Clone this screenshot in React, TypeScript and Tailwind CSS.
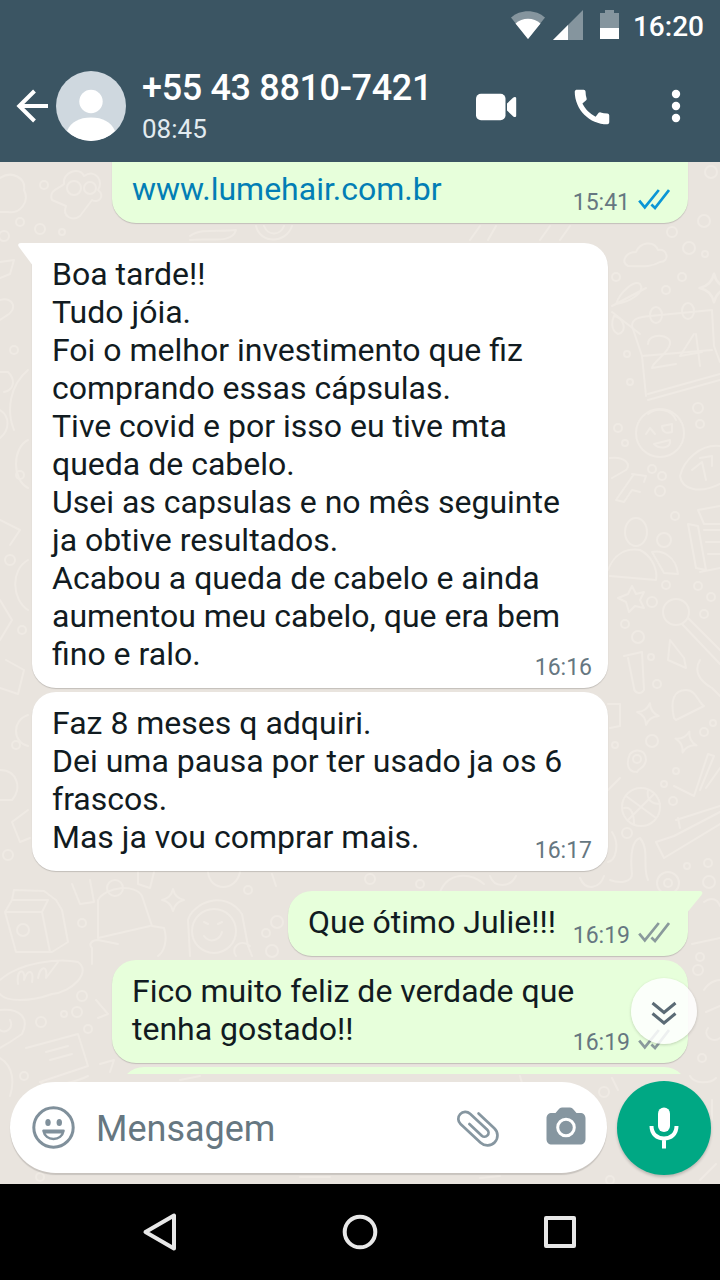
import type { ReactNode } from "react";
import { clsx } from "clsx";

interface BubbleProps {
  lines: string[];
  time: string;
  sent?: boolean;
  read?: boolean;
  link?: boolean;
  tail?: boolean;
  className?: string;
}

const Checks = ({ read }: { read?: boolean }) => (
  <svg
    width="32"
    height="22"
    viewBox="0 0 32 22"
    fill="none"
    strokeWidth="2.7"
    className={clsx("mb-[7px] ml-2", read ? "stroke-[#0a96d6]" : "stroke-[#8a9a9c]")}
  >
    <path d="M1.2 12.6L6.8 19.4L20.8 2" />
    <path d="M13.4 16.6L17 20L31 2" />
  </svg>
);

const Bubble = ({ lines, time, sent, read, link, tail, className }: BubbleProps) => (
  <div
    className={clsx(
      "relative flex shrink-0 items-end pt-3 pb-[15px] pl-5 shadow-[0_1px_1px_rgba(0,0,0,0.17)]",
      sent ? "self-end bg-[#e7ffdb] pr-[18px]" : "self-start bg-white pr-4",
      className
    )}
  >
    {tail && !sent && (
      <svg width="16" height="24" viewBox="0 0 16 24" className="absolute top-0 -left-[14px]">
        <path d="M16 0H3C.2 0-.6 2 1 4L14 21.500H16Z" fill="#fff" />
      </svg>
    )}
    {tail && sent && (
      <svg width="17" height="24" viewBox="0 0 17 24" className="absolute top-0 -right-[15px]">
        <path d="M0 0H13.500C16.500 0 17 2 15.500 4L2 20.500H0Z" fill="#e7ffdb" />
      </svg>
    )}
    <p
      className={clsx(
        "w-0 flex-1 text-[32px] leading-[38px] whitespace-nowrap",
        link ? "text-[#027eb5]" : "text-[#111b21]"
      )}
    >
      {lines.map((line) => (
        <span key={line} className="block">
          {line}
        </span>
      ))}
    </p>
    <div className="-mb-[9px] flex shrink-0 items-end text-[23px] leading-7 text-[#667781]">
      <span>{time}</span>
      {sent && <Checks read={read} />}
    </div>
  </div>
);

const star = "M0-11Q2-2 11 0Q2 2 0 11Q-2 2-11 0Q-2-2 0-11Z";

const dots: [number, number, number][] = [
  [711, 172, 6], [704, 221, 6], [672, 232, 5], [689, 248, 6], [705, 254, 3], [616, 277, 4], [682, 277, 4],
  [666, 290, 4], [627, 354, 3], [630, 382, 3], [698, 408, 5], [618, 428, 4], [700, 424, 4], [625, 443, 3],
  [652, 469, 4], [662, 476, 4], [660, 491, 5], [675, 516, 4], [664, 540, 7], [666, 585, 4], [698, 586, 4],
  [652, 602, 5], [711, 597, 4], [704, 614, 4], [625, 624, 4], [638, 637, 6], [651, 657, 3], [657, 684, 4],
  [713, 723, 3], [704, 732, 4], [652, 741, 6], [615, 745, 3], [676, 771, 3], [664, 784, 3], [673, 801, 4],
  [627, 833, 5], [687, 866, 3], [708, 863, 4], [709, 882, 6], [248, 890, 4], [277, 922, 6], [266, 933, 4],
  [272, 951, 6], [82, 923, 4], [82, 996, 5], [64, 1014, 3], [77, 1012, 5], [41, 1022, 5], [88, 1029, 4],
  [24, 1076, 4], [700, 957, 4], [698, 970, 5], [702, 1058, 4], [44, 185, 4], [20, 222, 4], [40, 229, 5],
  [4, 236, 5], [62, 232, 3], [14, 350, 4], [20, 475, 4], [10, 560, 5], [22, 630, 4], [16, 745, 4],
  [8, 855, 5], [420, 884, 4], [370, 879, 5], [604, 1092, 5], [610, 1180, 4], [40, 1177, 4],
];

const Wallpaper = () => (
  <svg
    width="720"
    height="1022"
    viewBox="0 162 720 1022"
    fill="none"
    stroke="#efeae4"
    strokeWidth="2"
    strokeLinejoin="round"
    strokeLinecap="round"
    className="absolute inset-0"
  >
    {dots.map(([x, y, r]) => (
      <circle key={`${x}-${y}`} cx={x} cy={y} r={r} />
    ))}

    {/* top left: cloud, hat, rings */}
    <path d="M0 178C12 170 26 178 24 190C30 202 20 214 8 212H0" />
    <path d="M52 200C48 190 60 188 64 184C62 172 80 166 84 176C96 168 104 182 98 190C106 196 98 204 92 200L80 216C72 222 62 216 66 206Z" />
    <circle cx="74" cy="188" r="7" />
    <circle cx="90" cy="188" r="6" />
    <path d="M190 236C200 228 220 232 236 230C232 244 210 238 190 240M256 226C260 244 286 244 292 226M264 226C268 236 280 236 284 226" />
    <path d="M470 240L480 226M488 240L496 226M540 240L550 226M560 240L570 226" />

    {/* left edge */}
    <path d="M0 262L14 260L10 274L0 278M0 300C14 296 18 310 6 316L0 320M0 372H8C16 380 14 390 4 392" />
    <path d="M28 370C10 385 6 410 14 430M0 410C10 416 10 430 0 438M28 440C12 448 12 480 28 488" />
    <path d="M0 520L20 530L10 545M28 560C10 570 12 600 28 610M0 600L12 620L0 640M6 660L24 670L18 694L0 688" />
    <path d="M28 715C12 720 12 742 28 746M0 770C18 770 22 790 12 800H0M28 810L12 822L20 842L30 838" />

    {/* right: cloud, scissors, calendar */}
    <path d="M628 266C620 262 626 252 636 252C640 242 654 240 658 250C668 248 670 262 660 262C650 268 640 266 628 266Z" />
    <path d="M612 306L646 288M612 312L640 334M616 304C620 292 634 280 640 284C646 292 630 302 616 304ZM614 316C624 318 628 332 618 334C610 330 612 320 614 316Z" />
    <path transform="translate(714 288) scale(1.3)" d={star} />
    <path d="M642 356L632 326C632 318 640 317 650 316L712 310L714 346L720 362M642 356L712 350M642 356L646 396M648 400L720 380M648 394L720 374" />
    <ellipse cx="656" cy="315" rx="6" ry="8" />
    <ellipse cx="688" cy="311" rx="6" ry="8" />
    <path d="M648 344C648 332 672 334 670 344C668 354 652 362 652 368L676 364M694 334L680 356L702 352M696 334L700 366" />
    <path d="M648 414C658 406 672 410 676 420" />

    {/* smiley, letters, bread */}
    <circle cx="660" cy="433" r="24" />
    <path d="M646 434L650 428L655 434M662 426L672 424L672 432C666 434 662 432 662 426ZM654 444L670 440C672 448 660 450 654 444Z" />
    <path d="M610 458C624 456 632 464 626 470L612 478M634 474L616 500L624 502L632 490L640 492M632 474L646 476L644 482" />
    <path d="M720 446C700 444 684 460 680 476C682 490 700 494 720 484M692 470L702 462L706 480M700 458L712 456V466" />
    <ellipse cx="636" cy="532" rx="11" ry="14" />
    <path d="M608 570C614 554 626 548 640 550C652 556 658 570 656 580L610 576M652 552C662 550 676 556 678 574L664 573Z" />
    <path d="M720 506L698 510L704 524H720M720 530H704M720 542H706M688 524L696 568L706 570L698 526ZM700 572L720 568M720 554H708" />

    {/* star, wand, bell */}
    <path d="M632 586L636 594L644 592L640 600L644 608L635 606L629 612L626 602L618 598L628 594Z" />
    <circle cx="676" cy="612" r="13" />
    <path d="M682 624L720 664M688 618L720 650M670 640L684 658L686 668L668 660Z" />
    <path d="M624 656L642 652L644 690C640 696 634 692 634 688L628 658M608 704H620V726L610 728M700 660C694 670 698 680 712 688L720 696" />
    <path d="M674 718C670 700 674 690 686 690C696 690 698 702 704 706L676 720Z" />
    <path transform="translate(648 714) rotate(10)" d={star} />
    <path transform="translate(686 742) rotate(18)" d={star} />
    <path d="M637 772C624 772 628 758 630 754C636 748 646 750 646 760C644 770 640 766 637 772Z" />
    <circle cx="637" cy="759" r="4" />
    <circle cx="641" cy="807" r="19" />
    <path d="M626 796L656 818M628 820L654 794M624 808C632 806 634 816 634 824M648 790C646 800 652 804 660 804" />
    <path d="M674 786L694 796L708 754L714 756L700 790M706 788L720 768M608 790L620 778" />
    <path d="M676 820L720 806M656 842L664 858L720 824M656 842L674 836L720 812M678 818L680 828" />
    <path d="M610 880C620 884 632 882 632 874C630 856 632 840 640 838C650 850 642 868 648 880M612 832C620 844 616 860 608 862" />
    <circle cx="668" cy="883" r="11" />
    <circle cx="668" cy="883" r="4" />

    {/* lower left: carton, bag, avatar, roll */}
    <path d="M12 900L14 890L44 891L56 900L62 910L68 942L52 952L16 952L5 912L12 900ZM5 912H42L50 952M42 912L48 900H12" />
    <circle cx="23" cy="930" r="6" />
    <path d="M72 884L80 904L94 902L90 880M138 872V884L150 888L154 872" />
    <path d="M98 938L98 900C106 886 136 884 142 896L152 926L164 928C168 940 164 952 158 956M98 938L150 926M92 964V948C88 944 92 940 98 940L118 944" />
    <circle cx="115" cy="888" r="8" />
    <path transform="translate(173 900)" d={star} />
    <path d="M190 956L188 920C192 904 224 888 242 914L248 946L252 956M236 956C230 948 240 938 250 946" />
    <circle cx="214" cy="931" r="22" />
    <path d="M204 922L208 924M218 924L222 922M204 936C210 944 220 940 222 932M208 872C210 892 236 892 240 872M272 874L276 886" />
    <path d="M0 980C20 962 60 958 78 962C92 972 72 992 52 994C30 1002 6 1002 0 994M18 984C16 968 26 968 24 980C28 968 34 970 32 982M38 978C40 966 48 964 46 978L58 962" />
    <path d="M0 1010C20 1008 30 1018 22 1034L10 1042L0 1048M0 1030C6 1034 14 1028 10 1020" />
    <path d="M26 1048L78 1034L88 1066L40 1082M46 1052L68 1046M50 1060L72 1054M96 1000L108 1014L98 1018M100 1064L114 1060L110 1072" />
    <path d="M0 1058C14 1066 14 1084 10 1096M40 1082C50 1090 80 1080 88 1076" />

    {/* lower right */}
    <path d="M440 892C448 872 470 872 484 884M490 876C494 888 510 888 516 876M580 878C586 892 600 888 604 876" />
    <path d="M704 902C712 896 718 900 720 906M692 944L720 938M704 990C710 980 720 980 720 980M706 1012L720 1006M708 1028C702 1036 714 1044 720 1038" />
    <path d="M520 1076L524 1090M612 1078L618 1090M690 1076C694 1084 710 1084 716 1078M712 1100V1120M300 1177H330M180 1080L200 1076M480 1178L500 1176M700 1180L716 1164" />
  </svg>
);

const StatusBar = () => (
  <div className="flex h-[50px] items-center justify-end pr-4 text-white">
    <svg width="110" height="32" viewBox="510 9 110 32" fill="#fff" className="mr-[13px]">
      <path d="M528 39L511 17.500C520 9 536 9 545 17.500Z" opacity=".38" />
      <path d="M528 39L515.500 23.500C522 17 534 17 540.500 23.500Z" />
      <path d="M553 40L583 10V40Z" opacity=".38" />
      <path d="M553 40L568 25V40Z" />
      <path d="M600 28V13H605V10H614V13H619V28Z" opacity=".38" />
      <path d="M600 28H619V39H600Z" />
    </svg>
    <span className="pt-1 text-[28px] leading-8 font-medium">16:20</span>
  </div>
);

const Toolbar = () => (
  <div className="flex h-28 items-center text-white">
    <svg width="34" height="36" viewBox="15 88 34 36" fill="none" stroke="#fff" strokeWidth="4" className="ml-[15px]">
      <path d="M48 106H19M34.500 91L19.300 106L34.500 121" />
    </svg>
    <svg width="70" height="70" viewBox="0 0 70 70" className="ml-[7px] rounded-full bg-[#cfd8df]">
      <circle cx="35" cy="30.500" r="11.700" fill="#fff" />
      <path d="M11 60C15 51 23 46.500 35 46.500S55 51 59 60C53 66.500 45 70 35 70S17 66.500 11 60Z" fill="#fff" />
    </svg>
    <div className="ml-4 flex w-[334px] flex-col pt-1">
      <span className="text-[36px] leading-[42px] font-medium tracking-[-0.35px] whitespace-nowrap">
        +55 43 8810-7421
      </span>
      <span className="text-[26px] leading-10 text-[#e2ebf0]">08:45</span>
    </div>
    <svg width="42" height="28" viewBox="475 93 42 28" fill="#fff" className="mt-0.5 -ml-px">
      <rect x="476" y="93.700" width="29.500" height="26.500" rx="5" />
      <path d="M507 103.500L513 97.800C514.500 96.500 516.200 96.700 516.200 98.500V115.500C516.200 117.300 514.500 117.500 513 116.200L507 110.500Z" />
    </svg>
    <svg width="46" height="46" viewBox="0 0 24 24" fill="#fff" className="mt-0.5 ml-[52px]">
      <path d="M20.010 15.380c-1.230 0-2.420-.2-3.530-.56-.35-.12-.74-.03-1.010.24l-1.570 1.970c-2.830-1.350-5.480-3.900-6.890-6.830l1.950-1.660c.27-.28.35-.67.24-1.020-.37-1.110-.56-2.300-.56-3.530 0-.54-.45-.99-.99-.99H4.190C3.650 3 3 3.240 3 3.990 3 13.280 10.730 21 20.010 21c.71 0 .99-.63.99-1.180v-3.450c0-.54-.45-.99-.99-.99z" />
    </svg>
    <svg width="10" height="34" viewBox="671 89 10 34" fill="#fff" className="ml-14">
      <circle cx="676" cy="94" r="4.200" />
      <circle cx="676" cy="106" r="4.200" />
      <circle cx="676" cy="118" r="4.200" />
    </svg>
  </div>
);

const ScrollDown = () => (
  <button className="absolute top-[816px] right-[23px] flex size-[66px] items-center justify-center rounded-full bg-white/85 shadow-[0_1px_3px_rgba(0,0,0,0.18)]">
    <svg width="26" height="26" viewBox="0 0 26 26" fill="none" stroke="#5b6b75" strokeWidth="3" className="mt-1">
      <path d="M1.500 3L13 12.500L24.500 3M1.500 13.500L13 23L24.500 13.500" />
    </svg>
  </button>
);

const Composer = () => (
  <div className="relative flex h-[110px] items-start pt-[7px] pl-[10px]">
    <div className="mt-px flex h-[91px] w-[597px] items-center rounded-full bg-white pl-[22px] shadow-[0_2px_1px_rgba(0,0,0,0.14)]">
      <svg width="43" height="43" viewBox="0 0 43 43" fill="none" stroke="#80909b" strokeWidth="3">
        <circle cx="21.500" cy="21.500" r="19.700" />
        <ellipse cx="16" cy="16.500" rx="2.700" ry="3.500" fill="#80909b" stroke="none" />
        <ellipse cx="27.300" cy="16.500" rx="2.700" ry="3.500" fill="#80909b" stroke="none" />
        <path d="M11.500 24.800H31.500C30.500 30 26.500 33 21.500 33S12.500 30 11.500 24.800Z" strokeWidth="2.600" strokeLinejoin="round" />
        <path d="M12 26.500H31" strokeWidth="2" />
      </svg>
      <span className="ml-[21px] flex-1 pt-[3px] text-[36px] leading-[42px] text-[#667781]">Mensagem</span>
      <svg
        width="46"
        height="44"
        viewBox="-23 -22 46 44"
        fill="none"
        stroke="#8696a0"
        strokeWidth="2.700"
        strokeLinecap="round"
        className="mr-[45px]"
      >
        <path
          transform="rotate(43)"
          d="M-9.500-11H12A10 10 0 0 1 12 9H-15.500A7 7 0 0 1-15.500-5H8A4 4 0 0 1 8 3H-9"
        />
      </svg>
      <svg width="40" height="40" viewBox="0 0 40 40" className="mr-[21px] mb-[5px]">
        <path
          d="M6 8H9.500L12.500 4.500C13.500 3.200 14.500 2.500 16 2.500H24C25.500 2.500 26.500 3.200 27.500 4.500L30.500 8H34C37.500 8 39.500 10 39.500 13.500V34C39.500 37.500 37.500 39.500 34 39.500H6C2.500 39.500.500 37.500.500 34V13.500C.500 10 2.500 8 6 8Z"
          fill="#8696a0"
        />
        <circle cx="20" cy="22.500" r="8.300" fill="none" stroke="#fff" strokeWidth="3" />
      </svg>
    </div>
    <div className="ml-[10px] flex size-[94px] items-center justify-center rounded-full bg-[#00a884] shadow-[0_2px_3px_rgba(0,0,0,0.2)]">
      <svg width="32" height="44" viewBox="648 1106 32 44" fill="none" stroke="#fff" strokeWidth="4">
        <rect x="658" y="1107.500" width="12" height="24.500" rx="6" fill="#fff" stroke="none" />
        <path d="M651.500 1126C651.500 1134 657 1138.500 664 1138.500S676.500 1134 676.500 1126M664 1138V1148.500" />
      </svg>
    </div>
  </div>
);

const NavKey = ({ children }: { children: ReactNode }) => (
  <svg width="40" height="40" viewBox="0 0 40 40" fill="none" stroke="#e8e8e8" strokeWidth="4" strokeLinejoin="round">
    {children}
  </svg>
);

export default function App() {
  return (
    <div className="flex h-[1280px] w-[720px] flex-col overflow-hidden bg-[#e9e4de] font-['Roboto',sans-serif]">
      <header className="h-[162px] shrink-0 bg-[#3b5563]">
        <StatusBar />
        <Toolbar />
      </header>

      <main className="relative h-[1022px] shrink-0 overflow-hidden">
        <Wallpaper />
        <div className="relative flex h-[912px] flex-col overflow-hidden pr-8 pl-8">
          <Bubble
            sent
            read
            link
            lines={["www.lumehair.com.br"]}
            time="15:41"
            className="-mt-1 w-[576px] rounded-b-[24px]"
          />
          <Bubble
            tail
            lines={[
              "Boa tarde!!",
              "Tudo jóia.",
              "Foi o melhor investimento que fiz",
              "comprando essas cápsulas.",
              "Tive covid e por isso eu tive mta",
              "queda de cabelo.",
              "Usei as capsulas e no mês seguinte",
              "ja obtive resultados.",
              "Acabou a queda de cabelo e ainda",
              "aumentou meu cabelo, que era bem",
              "fino e ralo.",
            ]}
            time="16:16"
            className="mt-5 w-[576px] rounded-[24px] rounded-tl-none"
          />
          <Bubble
            lines={["Faz 8 meses q adquiri.", "Dei uma pausa por ter usado ja os 6", "frascos.", "Mas ja vou comprar mais."]}
            time="16:17"
            className="mt-1 w-[576px] rounded-[24px]"
          />
          <Bubble
            sent
            tail
            lines={["Que ótimo Julie!!!"]}
            time="16:19"
            className="mt-5 w-[400px] rounded-[24px] rounded-tr-none"
          />
          <Bubble
            sent
            lines={["Fico muito feliz de verdade que", "tenha gostado!!"]}
            time="16:19"
            className="mt-1 w-[576px] rounded-[24px]"
          />
          <div className="mt-1 h-16 w-[568px] shrink-0 self-end rounded-[24px] bg-[#e7ffdb]" />
        </div>
        <ScrollDown />
        <Composer />
      </main>

      <nav className="flex h-24 shrink-0 items-center justify-center gap-40 bg-black">
        <NavKey>
          <path d="M5.500 20L34 3.500V36.500Z" />
        </NavKey>
        <NavKey>
          <circle cx="20" cy="20" r="15.300" />
        </NavKey>
        <NavKey>
          <path d="M6 6H34V34H6Z" />
        </NavKey>
      </nav>
    </div>
  );
}
